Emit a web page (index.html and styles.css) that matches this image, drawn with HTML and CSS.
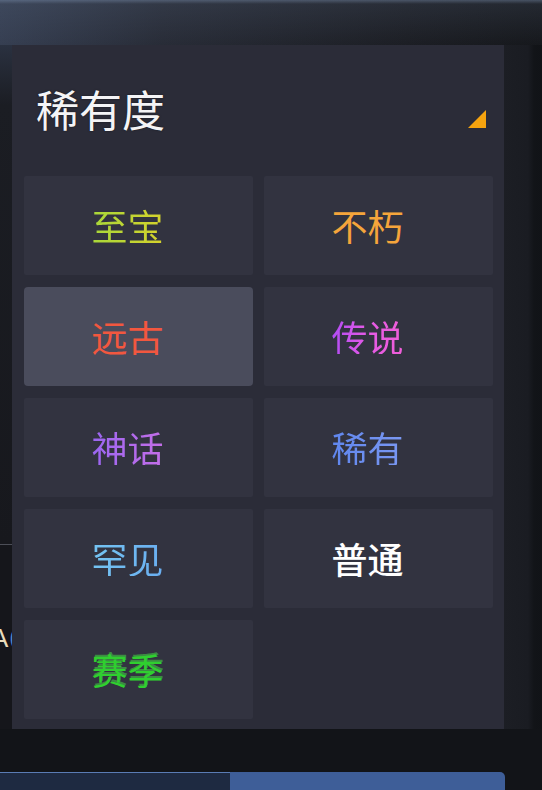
FILE: index.html
```html
<!DOCTYPE html>
<html lang="zh-CN">
<head>
<meta charset="utf-8">
<title>稀有度</title>
<link rel="stylesheet" href="styles.css">
</head>
<body>
<div class="screen">
  <div class="topband"></div>
  <div class="middle">
    <div class="leftstrip">
      <div class="ls-top"></div>
      <div class="ls-line"></div>
      <div class="ls-bottom"><span class="ls-a">A</span><span class="ls-b">(</span></div>
    </div>
    <div class="panel">
      <div class="header">
        <div class="title">稀有度</div>
        <svg class="corner" width="18" height="18" viewBox="0 0 18 18"><polygon points="18,0 18,18 0,18" fill="#f5a30f"/></svg>
      </div>
      <div class="grid">
        <div class="cell"><span class="t t-zhibao">至宝</span></div>
        <div class="cell"><span class="t t-buxiu">不朽</span></div>
        <div class="cell selected"><span class="t t-yuangu">远古</span></div>
        <div class="cell"><span class="t t-chuanshuo">传说</span></div>
        <div class="cell"><span class="t t-shenhua">神话</span></div>
        <div class="cell"><span class="t t-xiyou">稀有</span></div>
        <div class="cell"><span class="t t-hanjian">罕见</span></div>
        <div class="cell"><span class="t t-putong">普通</span></div>
        <div class="cell"><span class="t t-saiji">赛季</span></div>
      </div>
    </div>
    <div class="rightstrip"></div>
  </div>
  <div class="gapband"></div>
  <div class="bottombar">
    <div class="bar-left"></div>
    <div class="bar-right"></div>
    <div class="bar-rest"></div>
  </div>
</div>
</body>
</html>
```

FILE: styles.css
```css
html, body {
  margin: 0;
  padding: 0;
  background: #111317;
}
.screen {
  width: 542px;
  height: 790px;
  overflow: hidden;
  display: flex;
  flex-direction: column;
  font-family: "Noto Sans CJK SC", "Noto Sans", sans-serif;
}
.topband {
  height: 45px;
  flex: none;
  background:
    linear-gradient(to bottom, rgba(120,140,170,0.5) 0, rgba(90,105,130,0.2) 4px, rgba(0,0,0,0) 45px),
    linear-gradient(to right, #363f52 0, #282c37 30%, #1c1e24 75%, #16181c 100%);
}
.middle {
  height: 684px;
  flex: none;
  display: flex;
}
.leftstrip {
  width: 12px;
  flex: none;
  display: flex;
  flex-direction: column;
  overflow: hidden;
}
.ls-top {
  height: 499px;
  flex: none;
  background: linear-gradient(to bottom, #2a3140 0, #1b1d23 60px, #17181d 100%);
}
.ls-line {
  height: 1px;
  flex: none;
  background: #4c4e57;
}
.ls-bottom {
  flex: 1;
  background: #15161b;
  padding-top: 80px;
  display: flex;
  align-items: flex-start;
  font-family: "Liberation Sans", sans-serif;
  font-size: 26px;
  line-height: 1;
  white-space: nowrap;
}
.ls-a {
  color: #e9dcbc;
  margin-left: -9px;
}
.ls-b {
  color: #4f86c8;
  font-size: 24px;
  margin-left: 1px;
}
.panel {
  width: 492px;
  flex: none;
  background: #2b2c38;
  display: flex;
  flex-direction: column;
}
.header {
  height: 131px;
  flex: none;
  display: flex;
  align-items: center;
  justify-content: space-between;
  padding: 0 18px 0 24px;
}
.title {
  color: #f4f4f6;
  font-size: 43px;
  font-weight: 400;
  line-height: 1;
  margin-top: -4px;
  text-shadow: 0 0 2px rgba(0,0,0,0.5);
}
.corner {
  display: block;
  margin-top: 17px;
}
.grid {
  display: grid;
  grid-template-columns: 229px 229px;
  grid-auto-rows: 99px;
  column-gap: 11px;
  row-gap: 12px;
  padding: 0 11px 0 12px;
}
.cell {
  background: #323340;
  border-radius: 2px;
  display: flex;
  align-items: center;
  justify-content: center;
  padding-right: 22px;
}
.cell.selected {
  background: #4a4c5c;
  border-radius: 4px;
}
.t {
  font-size: 36px;
  font-weight: 400;
  line-height: 1;
  margin-top: -2px;
}
.t-zhibao {
  background: linear-gradient(to right, #a8d83a, #d6d22c);
  -webkit-background-clip: text;
  background-clip: text;
  color: transparent;
}
.t-buxiu { color: #f5a53b; }
.t-yuangu { color: #f2573f; }
.t-chuanshuo {
  background: linear-gradient(to right, #b04cf5, #e55ae6 50%, #f05ed8);
  -webkit-background-clip: text;
  background-clip: text;
  color: transparent;
}
.t-shenhua {
  background: linear-gradient(to right, #9a66f2, #c46ee8);
  -webkit-background-clip: text;
  background-clip: text;
  color: transparent;
}
.t-xiyou {
  background: linear-gradient(to right, #5f86ee, #7b98f2);
  -webkit-background-clip: text;
  background-clip: text;
  color: transparent;
}
.t-hanjian {
  background: linear-gradient(to right, #74c4f2, #6aaef0);
  -webkit-background-clip: text;
  background-clip: text;
  color: transparent;
}
.t-putong { color: #ffffff; font-weight: 500; }
.t-saiji {
  color: #2fcf2f;
  text-shadow: 1px -2px 0 rgba(70,220,70,0.55);
}
.rightstrip {
  flex: 1;
  background: linear-gradient(to right, #1c1e24 0, #1a1c22 24px, #121418 30px, #111317 100%);
}
.gapband {
  height: 43px;
  flex: none;
  background: #121418;
}
.bottombar {
  flex: 1;
  display: flex;
}
.bar-left {
  width: 230px;
  flex: none;
  background: #1e2a41;
  border-top: 1px solid #5a7cb4;
}
.bar-right {
  width: 275px;
  flex: none;
  background: #3e5e98;
  border-radius: 0 5px 0 0;
}
.bar-rest {
  flex: 1;
  background: #121418;
}
```
